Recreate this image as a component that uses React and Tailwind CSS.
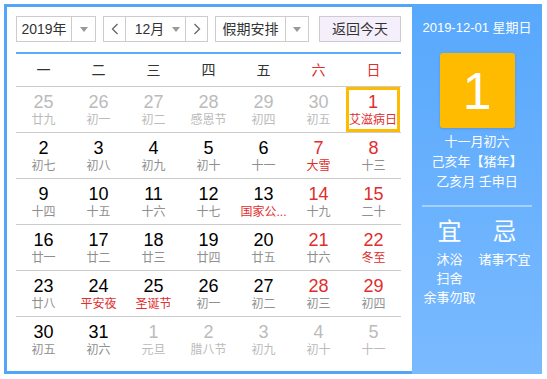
import React from 'react';

const FONT = { fontFamily: '"Liberation Sans", "Noto Sans CJK SC", sans-serif' };

const WEEK = ['一', '二', '三', '四', '五', '六', '日'];

// [day, lunar, other month, red number, red lunar, today]
const ROWS = [
  [[25, '廿九', 1], [26, '初一', 1], [27, '初二', 1], [28, '感恩节', 1], [29, '初四', 1], [30, '初五', 1], [1, '艾滋病日', 0, 1, 1, 1]],
  [[2, '初七'], [3, '初八'], [4, '初九'], [5, '初十'], [6, '十一'], [7, '大雪', 0, 1, 1], [8, '十三', 0, 1]],
  [[9, '十四'], [10, '十五'], [11, '十六'], [12, '十七'], [13, '国家公...', 0, 0, 1], [14, '十九', 0, 1], [15, '二十', 0, 1]],
  [[16, '廿一'], [17, '廿二'], [18, '廿三'], [19, '廿四'], [20, '廿五'], [21, '廿六', 0, 1], [22, '冬至', 0, 1, 1]],
  [[23, '廿八'], [24, '平安夜', 0, 0, 1], [25, '圣诞节', 0, 0, 1], [26, '初一'], [27, '初二'], [28, '初三', 0, 1], [29, '初四', 0, 1]],
  [[30, '初五'], [31, '初六'], [1, '元旦', 1], [2, '腊八节', 1], [3, '初九', 1], [4, '初十', 1], [5, '十一', 1]],
];

const Caret = () => (
  <span className="w-0 h-0 border-x-[4px] border-x-transparent border-t-[5px] border-t-[#999]" />
);

const Chevron = ({ dir }) => (
  <svg width="8" height="12" viewBox="0 0 8 12" fill="none" stroke="#666" strokeWidth="1.3">
    {dir === 'left' ? <path d="M6.5 1 L1.5 6 L6.5 11" /> : <path d="M1.5 1 L6.5 6 L1.5 11" />}
  </svg>
);

const DayCell = ({ cell }) => {
  const [day, lunar, other, redNum, redLunar, today] = cell;
  const numColor = other ? 'text-[#bbbbbb]' : redNum ? 'text-[#e12d2d]' : 'text-black';
  const lunarColor = redLunar ? 'text-[#e12d2d]' : other ? 'text-[#bbbbbb]' : 'text-[#8f8f8f]';
  return (
    <div
      className={`flex flex-col items-center ${
        today ? 'border-[3px] border-[#ffbb00] pt-[2px] mr-[1px]' : 'pt-[5px]'
      }`}
    >
      <span className={`text-[18px] leading-[20px] ${numColor}`}>{day}</span>
      <span className={`text-[12px] leading-[16px] whitespace-nowrap ${lunarColor}`}>{lunar}</span>
    </div>
  );
};

export default function App() {
  return (
    <div className="p-1 bg-white" style={FONT}>
      <div className="flex w-[538px] h-[370px]">
        <div className="flex-1 flex flex-col border-l-[3px] border-y-[3px] border-[#52a6f8] pl-[9px] pr-[11px] pt-[9px]">
          {/* controls */}
          <div className="flex h-[26px] text-[14px] text-[#333]">
            <div className="w-[80px] flex border border-[#cccccc]">
              <div className="w-[55px] flex items-center justify-center border-r border-[#cccccc]">2019年</div>
              <div className="flex-1 flex items-center justify-center"><Caret /></div>
            </div>
            <div className="w-[105px] ml-[7px] flex border border-[#cccccc]">
              <div className="w-[22px] flex items-center justify-center border-r border-[#cccccc]"><Chevron dir="left" /></div>
              <div className="flex-1 flex items-center justify-center gap-[8px] pl-[4px]">
                <span>12月</span>
                <Caret />
              </div>
              <div className="w-[22px] flex items-center justify-center border-l border-[#cccccc]"><Chevron dir="right" /></div>
            </div>
            <div className="w-[94px] ml-[7px] flex border border-[#cccccc]">
              <div className="w-[70px] flex items-center justify-center border-r border-[#cccccc]">假期安排</div>
              <div className="flex-1 flex items-center justify-center"><Caret /></div>
            </div>
            <div className="w-[82px] ml-[10px] flex items-center justify-center border border-[#cccccc] bg-[#f5eefb]">
              返回今天
            </div>
          </div>

          <div className="mt-[10px] h-[2px] bg-[#5aabf9]" />

          {/* week header */}
          <div className="grid grid-cols-7 h-[33px] border-b border-[#cccccc] text-[14px]">
            {WEEK.map((w, i) => (
              <div key={w} className={`flex items-center justify-center ${i >= 5 ? 'text-[#e12d2d]' : 'text-[#333]'}`}>
                {w}
              </div>
            ))}
          </div>

          {/* days */}
          {ROWS.map((row, r) => (
            <div
              key={r}
              className={`grid grid-cols-7 h-[46px] ${r < ROWS.length - 1 ? 'border-b border-[#cccccc]' : ''}`}
            >
              {row.map((cell, c) => (
                <DayCell key={c} cell={cell} />
              ))}
            </div>
          ))}
        </div>

        {/* right panel */}
        <div className="w-[130px] flex flex-col items-center bg-gradient-to-b from-[#57a8fc] to-[#7abaff] text-white">
          <div className="pt-[14px] text-[13px] leading-[20px]">2019-12-01 星期日</div>
          <div className="mt-[15px] w-[75px] h-[75px] rounded-[3px] bg-[#ffbb00] shadow-sm flex items-center justify-center text-[52px] leading-none">
            1
          </div>
          <div className="mt-[4px] text-[13px] leading-[20px] text-center">
            <div>十一月初六</div>
            <div>己亥年【猪年】</div>
            <div>乙亥月 壬申日</div>
          </div>
          <div className="mt-[13px] w-[110px] h-[2px] bg-white/40" />
          <div className="mt-[11px] w-[110px] grid grid-cols-2 text-center">
            <div className="flex flex-col items-center">
              <div className="text-[24px] leading-[28px]">宜</div>
              <div className="mt-[4px] text-[13px] leading-[19px] whitespace-nowrap">
                <div>沐浴</div>
                <div>扫舍</div>
                <div>余事勿取</div>
              </div>
            </div>
            <div className="flex flex-col items-center">
              <div className="text-[24px] leading-[28px]">忌</div>
              <div className="mt-[4px] text-[13px] leading-[19px] whitespace-nowrap">
                <div>诸事不宜</div>
              </div>
            </div>
          </div>
        </div>
      </div>
    </div>
  );
}
